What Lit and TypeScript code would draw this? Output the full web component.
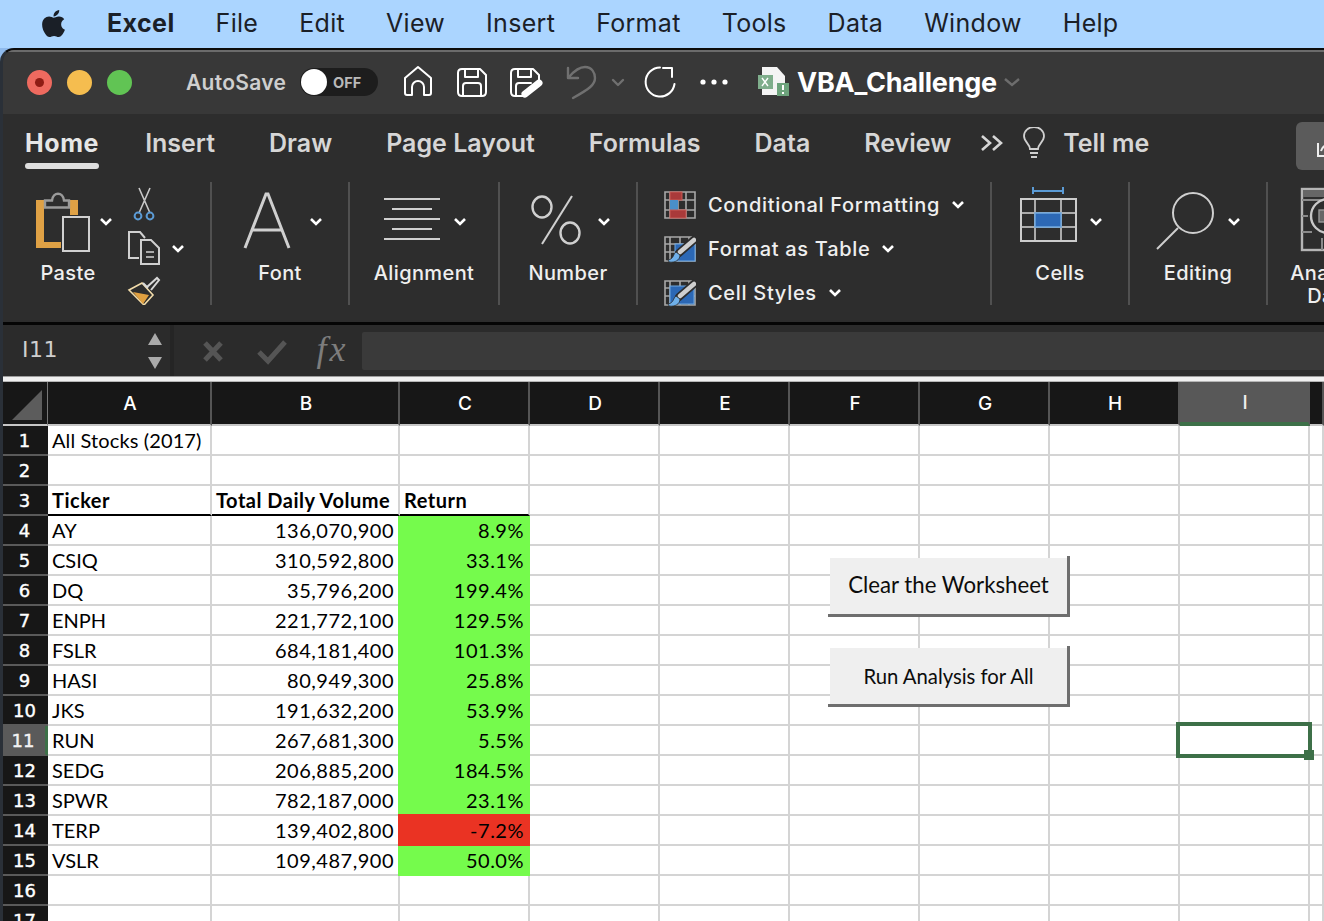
import { LitElement, html, css, svg } from 'lit'
import { customElement } from 'lit/decorators.js'

const MENU = ['File', 'Edit', 'View', 'Insert', 'Format', 'Tools', 'Data', 'Window', 'Help']
const TABS = ['Insert', 'Draw', 'Page Layout', 'Formulas', 'Data', 'Review']
const COLS = ['A', 'B', 'C', 'D', 'E', 'F', 'G', 'H', 'I', '']

const STOCKS: [string, string, string][] = [
  ['AY', '136,070,900', '8.9%'],
  ['CSIQ', '310,592,800', '33.1%'],
  ['DQ', '35,796,200', '199.4%'],
  ['ENPH', '221,772,100', '129.5%'],
  ['FSLR', '684,181,400', '101.3%'],
  ['HASI', '80,949,300', '25.8%'],
  ['JKS', '191,632,200', '53.9%'],
  ['RUN', '267,681,300', '5.5%'],
  ['SEDG', '206,885,200', '184.5%'],
  ['SPWR', '782,187,000', '23.1%'],
  ['TERP', '139,402,800', '-7.2%'],
  ['VSLR', '109,487,900', '50.0%'],
]

const chevron = html`<svg class="chev" width="14" height="9" viewBox="0 0 14 9"><path d="M2 2l5 5 5-5" fill="none" stroke="#fff" stroke-width="2.6"/></svg>`

const brush = svg`
  <path d="M31 4L15 18" stroke="#2d2d2d" stroke-width="8" stroke-linecap="round"/>
  <path d="M30 5L16 17" stroke="#cfcfcf" stroke-width="4.5" stroke-linecap="round"/>
  <path d="M5 27c6 1 11-2 11-7l-4-3c-3 2-2 7-8 8z" fill="#6fb0ea" stroke="#2d2d2d" stroke-width=".8"/>`

@customElement('app-root')
export class AppRoot extends LitElement {
  static styles = css`
    :host {
      display: block;
      width: 1324px;
      height: 921px;
      overflow: hidden;
      background: #8fbaec;
      font-family: Inter, "Liberation Sans", sans-serif;
    }

    svg { display: block; flex: none; }

    .menubar {
      height: 48px;
      box-sizing: border-box;
      background: #abd5ff;
      display: flex;
      align-items: center;
      padding: 0 0 2px 40px;
      gap: 41px;
      font-size: 25px;
      letter-spacing: 0.3px;
      color: #1b2027;
    }
    .menubar .logo { margin-right: -1px; }
    .menubar b { font-weight: 700; letter-spacing: 0.4px; }

    .window {
      height: 873px;
      box-sizing: border-box;
      border-left: 3px solid #2a3038;
      border-top: 2px solid #0c0c0c;
      border-top-left-radius: 14px;
      background: #2d2d2d;
      overflow: hidden;
    }

    .titlebar {
      height: 64px;
      box-sizing: border-box;
      background: #383838;
      border-top: 2px solid #6b6b6b;
      display: flex;
      align-items: center;
      padding: 0 0 2px 24px;
    }
    .light {
      width: 25px;
      height: 25px;
      border-radius: 50%;
      margin-right: 15px;
      display: flex;
      align-items: center;
      justify-content: center;
    }
    .light.red { background: #ee6a5f; }
    .light.red::after {
      content: '';
      width: 9px;
      height: 9px;
      border-radius: 50%;
      background: #8e1c14;
    }
    .light.yellow { background: #f5bd4f; }
    .light.green { background: #61c454; }
    .autosave {
      margin-left: 39px;
      font-size: 21px;
      font-weight: 600;
      color: #cfcfcf;
      letter-spacing: 0.3px;
      width: 114px;
    }
    .toggle {
      width: 78px;
      height: 28px;
      border-radius: 14px;
      background: #1d1d1d;
      display: flex;
      align-items: center;
      box-sizing: border-box;
      padding-left: 1px;
    }
    .knob {
      width: 26px;
      height: 26px;
      border-radius: 50%;
      background: #fff;
      margin-right: 6px;
    }
    .toggle span { font-size: 14.5px; font-weight: 700; color: #b9b9b9; }
    .quick { margin-left: 22px; }
    .doc { margin-left: 18px; }
    .docname {
      margin-left: 7px;
      font-size: 27px;
      font-weight: 700;
      color: #fff;
      letter-spacing: -0.25px;
    }
    .docchev { margin-left: 7px; }

    .tabs {
      height: 64px;
      position: relative;
      display: flex;
      align-items: center;
      padding: 0 0 6px 22px;
      box-sizing: border-box;
      gap: 54px;
      font-size: 25px;
      font-weight: 600;
      color: #d6d6d6;
    }
    .tab-home {
      color: #e6e6e6;
      font-weight: 700;
      letter-spacing: 0.6px;
      position: relative;
      margin-right: -8px;
    }
    .tab-home::after {
      content: '';
      position: absolute;
      left: 0;
      right: 0;
      bottom: -11px;
      height: 6px;
      border-radius: 3px;
      background: #dedede;
    }
    .more { margin-left: -25px; }
    .bulb { margin-left: -35px; }
    .tell { margin-left: -36px; }
    .share {
      position: absolute;
      left: 1293px;
      top: 8px;
      width: 40px;
      height: 48px;
      background: #5b5b5b;
      border-radius: 6px;
    }

    .ribbon {
      height: 147px;
      box-sizing: border-box;
      padding-top: 4px;
      border-bottom: 3px solid #050505;
      display: flex;
      align-items: flex-start;
      overflow: hidden;
    }
    .group {
      width: 138px;
      height: 123px;
      box-sizing: border-box;
      border-right: 2px solid #505050;
      display: flex;
      flex-direction: column;
      align-items: center;
      flex: none;
    }
    .label {
      margin-top: 4px;
      height: 22px;
      line-height: 22px;
      font-size: 20px;
      font-weight: 500;
      color: #efefef;
      text-align: center;
      letter-spacing: 0.4px;
    }
    .paste { width: 209px; flex-direction: row; align-items: flex-start; }
    .paste .col { width: 130px; display: flex; flex-direction: column; align-items: center; }
    .paste .clip { margin-left: -8px; }
    .align { width: 150px; }
    .styles { width: 354px; align-items: flex-start; padding-left: 26px; }
    .style-row {
      height: 44px;
      box-sizing: border-box;
      padding-top: 1px;
      flex: none;
      display: flex;
      align-items: center;
      font-size: 20px;
      font-weight: 500;
      color: #efefef;
      letter-spacing: 0.7px;
      white-space: nowrap;
    }
    .style-row svg:first-child { margin-right: 12px; }
    .style-row .chev { margin-left: 11px; }
    .analyze { width: 124px; border: none; }
    .analyze svg { align-self: flex-start; }
    .analyze .label { line-height: 23px; height: 46px; }

    .formula {
      height: 51px;
      display: flex;
      background: #2b2b2b;
    }
    .namebox {
      width: 171px;
      box-sizing: border-box;
      padding-left: 19px;
      display: flex;
      align-items: center;
      justify-content: space-between;
      font-family: "DejaVu Sans", sans-serif;
      font-size: 22px;
      letter-spacing: 0.5px;
      color: #cfcfcf;
      border-right: 4px solid #252525;
      flex: none;
    }
    .namebox span { padding-bottom: 3px; }
    .steppers { margin-right: 8px; }
    .marks { margin-left: 25px; flex: none; }
    .fx {
      width: 59px;
      text-align: center;
      font-family: "Liberation Serif", serif;
      font-style: italic;
      font-size: 36px;
      letter-spacing: 3px;
      line-height: 49px;
      color: #7d7d7d;
      flex: none;
      margin-left: -11px;
    }
    .input {
      flex: 1;
      margin: 7px 0 6px 0;
      background: #3a3a3a;
      border-radius: 2px 0 0 2px;
    }
    .rule {
      height: 6px;
      box-sizing: border-box;
      background: #f0f0f0;
      border-top: 1px solid #9c9c9c;
      border-bottom: 1px solid #b5b5b5;
    }

    .sheet {
      position: relative;
      display: grid;
      grid-template-columns: 45px 164px 188px repeat(7, 130px) 1fr;
      grid-auto-rows: 30px;
      grid-template-rows: 44px;
      background: #fff;
      color: #000;
      font-family: Lato, "Liberation Sans", sans-serif;
      font-size: 20px;
    }
    .corner, .colhead {
      background: #171717;
      border-bottom: 2px solid #c6c6c6;
      box-sizing: border-box;
    }
    .corner { border-right: 1px solid #777; padding: 8px 0 0 9px; }
    .colhead {
      border-right: 2px solid #555;
      color: #fff;
      font-family: Inter, sans-serif;
      font-size: 19px;
      font-weight: 500;
      display: flex;
      align-items: center;
      justify-content: center;
      padding: 1px 0 0 2px;
    }
    .colhead.active {
      background: #585858;
      border-right-color: #585858;
      border-bottom: 4px solid #3d7048;
      color: #eee;
    }
    .rowhead {
      background: #171717;
      border-bottom: 2px solid #5a5a5a;
      box-sizing: border-box;
      color: #fff;
      font-family: "DejaVu Sans", sans-serif;
      font-size: 18px;
      -webkit-text-stroke: 0.4px #fff;
      display: flex;
      align-items: center;
      justify-content: center;
      padding: 1px 2px 0 0;
    }
    .rowhead.active {
      background: #5a5a5a;
      border-right: 3px solid #3d7048;
      color: #eee;
    }
    .cell {
      box-sizing: border-box;
      border-right: 2px solid #d4d4d4;
      border-bottom: 2px solid #d4d4d4;
      padding: 0 4px;
      line-height: 28px;
      white-space: nowrap;
      overflow: visible;
    }
    .cell.title { letter-spacing: 0.12px; }
    .cell.bold { font-weight: 700; letter-spacing: 0.5px; border-bottom: 2px solid #000; }
    .cell.num { text-align: right; letter-spacing: 0.5px; }
    .cell.up { background: #75fb4c; border-color: #75fb4c; box-shadow: -2px 0 0 #75fb4c; }
    .cell.down {
      background: #ea3323;
      border-color: #ea3323;
      box-shadow: -2px 0 0 #ea3323, 0 -2px 0 #ea3323, -2px -2px 0 #ea3323;
    }

    .btn {
      position: absolute;
      left: 825px;
      width: 242px;
      height: 61px;
      box-sizing: border-box;
      padding: 2px 3px 3px 2px;
      background: #6e6e6e;
      clip-path: polygon(0 58px, 2px 58px, 2px 2px, 239px 2px, 239px 0, 100% 0, 100% 100%, 0 100%);
    }
    .btn div {
      height: 100%;
      box-sizing: border-box;
      background: #efefef;
      display: flex;
      align-items: center;
      justify-content: center;
      color: #0c0c0c;
    }
    .btn.clear { top: 174px; }
    .btn.clear div { font-size: 22.2px; padding-bottom: 3px; }
    .btn.run { top: 264px; }
    .btn.run div { font-size: 20.3px; padding-bottom: 1px; }
    .selection {
      position: absolute;
      left: 1173px;
      top: 340px;
      width: 136px;
      height: 36px;
      box-sizing: border-box;
      border: 4px solid #3d7048;
    }
    .selection::after {
      content: '';
      position: absolute;
      right: -6px;
      bottom: -6px;
      width: 10px;
      height: 10px;
      background: #3d7048;
    }
  `

  private titleIcons() {
    return html`<svg class="quick" width="340" height="46" viewBox="400 59 340 46" fill="none" stroke="#fff" stroke-width="2" stroke-linejoin="round" stroke-linecap="round">
      <path d="M405 78L418 67l13 11v15q0 2-2 2h-5V87a6 6 0 0 0-12 0v8h-5q-2 0-2-2z"/>
      <path d="M462 69h18l6 6v17q0 4-4 4h-20q-4 0-4-4V73q0-4 4-4z"/>
      <path d="M465 69v8h13v-8M463 96V86q0-3 3-3h12q3 0 3 3v10"/>
      <path d="M515 69h18l6 6v5M524 96h-9q-4 0-4-4V73q0-4 4-4M518 69v8h13v-8M516 96V86q0-3 3-3h12"/>
      <path d="M525 94L539 83" stroke-width="7"/>
      <g stroke="#707070" stroke-width="2.4">
        <path d="M568 68v10h10M569 77c6-7 11-10 16-10 7 0 10 6 10 11 0 7-6 11-22 20"/>
        <path d="M613 80l5 5 5-5"/>
      </g>
      <path d="M660 67.5A14.5 14.5 0 1 0 674.5 84M663 68h9v9"/>
      <g fill="#fff" stroke="none">
        <circle cx="703" cy="82" r="2.6"/><circle cx="714" cy="82" r="2.6"/><circle cx="725" cy="82" r="2.6"/>
      </g>
    </svg>`
  }

  private docIcon() {
    return html`<svg class="doc" width="32" height="30" viewBox="758 67 32 30">
      <path d="M762 67h15l8 9v19h-23z" fill="#f4f4f4"/>
      <rect x="758" y="75" width="15" height="14" fill="#7fae8c"/>
      <path d="M762 78l6 8M768 78l-6 8" stroke="#fff" stroke-width="1.4"/>
      <rect x="777" y="83" width="12" height="13" fill="#6da37c"/>
      <path d="M783 85v5M783 92v2" stroke="#fff" stroke-width="2"/>
    </svg>`
  }

  private pasteIcons() {
    return html`<svg width="130" height="76" viewBox="3 182 130 76">
      <path d="M36 200h42v15h-8v-8H44v35h17v6H36z" fill="#dfa145"/>
      <path d="M45 207.500v-7h7c1-9 11-9 12 0h5v7z" fill="#2d2d2d" stroke="#9a9a9a" stroke-width="2.400"/>
      <rect x="63" y="217" width="26" height="34" fill="#2d2d2d" stroke="#d0d0d0" stroke-width="2"/>
      <path d="M101 219l5 5 5-5" fill="none" stroke="#fff" stroke-width="2.6"/>
    </svg>`
  }

  private clipIcons() {
    return html`<svg class="clip" width="70" height="123" viewBox="125 182 70 123" fill="none">
      <path d="M139 188l11 25M150 188l-11 25" stroke="#c8c8c8" stroke-width="1.6"/>
      <circle cx="138" cy="216" r="3.4" stroke="#5b9bd5" stroke-width="2"/>
      <circle cx="150" cy="216" r="3.4" stroke="#5b9bd5" stroke-width="2"/>
      <path d="M139 258h-10v-26h11l5 6" stroke="#cfcfcf" stroke-width="2"/>
      <path d="M141 240h10l8 8v16h-18z" fill="#2d2d2d" stroke="#cfcfcf" stroke-width="2"/>
      <path d="M146 252h8M146 257h8" stroke="#aaa" stroke-width="2"/>
      <path d="M173 246l5 5 5-5" stroke="#fff" stroke-width="2.6"/>
      <path d="M129 290l13-7 11 12-9 10z" stroke="#f2dcaa" stroke-width="1.6"/>
      <path d="M133 292l16 3-6 9z" fill="#e0a040"/>
      <path d="M143 283l5 5M147 287l10-9 2 2-8 10" stroke="#d8d8d8" stroke-width="2"/>
    </svg>`
  }

  private cfIcon() {
    return html`<svg width="32" height="28" viewBox="664 190 32 28" fill="none">
      <path d="M665 191h30v26h-30zM670 191v26M678 191v26M686 191v26M665 199h30M665 209h30" stroke="#a8a8a8" stroke-width="1.6"/>
      <rect x="670" y="191" width="12" height="8" fill="#a93a3a" stroke="#c75a55"/>
      <rect x="670" y="199" width="8" height="10" fill="#4a8fc9"/>
      <rect x="670" y="209" width="16" height="8" fill="#a93a3a" stroke="#c75a55"/>
    </svg>`
  }

  private tableIcon(stylesIcon: boolean) {
    return html`<svg width="32" height="28" viewBox="0 0 32 28" fill="none">
      <path d="M1 2h30v24H1zM6 2v24M16 2v24M25 2v24M1 9h30M1 17h30" stroke="#a8a8a8" stroke-width="1.6"/>
      ${stylesIcon
        ? svg`<rect x="6" y="7" width="24" height="18" fill="#2c68b5" stroke="#6fa8e0"/>`
        : svg`<rect x="11" y="9" width="20" height="17" fill="#2c68b5" stroke="#6fa8e0"/>`}
      ${brush}
    </svg>`
  }

  private bigIcons(kind: string) {
    const common = 'fill:none;stroke:#cfcfcf;'
    if (kind === 'font') {
      return html`<svg width="136" height="76" viewBox="212 182 136 76">
        <path d="M245 248l21-54h2l21 54M252 230h31" style="${common}stroke-width:3"/>
        <path d="M311 219l5 5 5-5" fill="none" stroke="#fff" stroke-width="2.6"/>
      </svg>`
    }
    if (kind === 'align') {
      return html`<svg width="148" height="76" viewBox="350 182 148 76">
        <path d="M384 199h56M392 209h40M384 219h56M392 229h40M384 239h56" style="${common}stroke-width:2"/>
        <path d="M455 219l5 5 5-5" fill="none" stroke="#fff" stroke-width="2.6"/>
      </svg>`
    }
    if (kind === 'number') {
      return html`<svg width="136" height="76" viewBox="500 182 136 76">
        <ellipse cx="542" cy="207" rx="9.5" ry="10.5" style="${common}stroke-width:2.4"/>
        <ellipse cx="570" cy="233" rx="9.5" ry="10.5" style="${common}stroke-width:2.4"/>
        <path d="M572 196l-30 48" style="${common}stroke-width:2"/>
        <path d="M599 219l5 5 5-5" fill="none" stroke="#fff" stroke-width="2.6"/>
      </svg>`
    }
    if (kind === 'cells') {
      return html`<svg width="136" height="76" viewBox="992 182 136 76" fill="none">
        <path d="M1033 187v7M1063 187v7M1033 191h30" stroke="#5b9bd5" stroke-width="2"/>
        <path d="M1021 199h55v42h-55zM1035 199v42M1061 199v42M1021 213h55M1021 227h55" stroke="#aaa" stroke-width="2"/>
        <rect x="1035" y="213" width="26" height="14" fill="#2c68b5" stroke="#6fa8e0" stroke-width="1.5"/>
        <path d="M1021 199h55v42h-55z" stroke="#ccc" stroke-width="2"/>
        <path d="M1091 219l5 5 5-5" stroke="#fff" stroke-width="2.6"/>
      </svg>`
    }
    return html`<svg width="136" height="76" viewBox="1130 182 136 76" fill="none">
      <circle cx="1193" cy="213" r="20" stroke="#cfcfcf" stroke-width="2"/>
      <path d="M1178 228l-21 21" stroke="#cfcfcf" stroke-width="2"/>
      <path d="M1229 219l5 5 5-5" stroke="#fff" stroke-width="2.6"/>
    </svg>`
  }

  private analyzeIcon() {
    return html`<svg width="76" height="76" viewBox="1268 182 76 76" fill="none">
      <rect x="1302" y="189" width="40" height="61" stroke="#b5b5b5" stroke-width="2.4"/>
      <rect x="1303" y="190" width="40" height="7" fill="#666"/>
      <path d="M1302 200h40M1302 216h6M1302 232h10M1322 238v12" stroke="#8a8a8a" stroke-width="2"/>
      <circle cx="1328" cy="216" r="17" fill="#2d2d2d" stroke="#c8c8c8" stroke-width="2.4"/>
      <rect x="1319" y="210" width="12" height="12" fill="#666" stroke="#999" stroke-width="1.4"/>
    </svg>`
  }

  private renderRows() {
    const rows: unknown[] = []
    for (let r = 1; r <= 17; r++) {
      const stock = r >= 4 && r <= 15 ? STOCKS[r - 4] : null
      const isHeader = r === 3
      rows.push(html`<div class="rowhead ${r === 11 ? 'active' : ''}">${r}</div>`)
      COLS.forEach((_, c) => {
        let text = ''
        let cls = 'cell'
        if (r === 1 && c === 0) {
          text = 'All Stocks (2017)'
          cls += ' title'
        }
        if (isHeader && c < 3) {
          text = ['Ticker', 'Total Daily Volume', 'Return'][c]
          cls += ' bold'
        }
        if (stock && c < 3) {
          text = stock[c]
          if (c > 0) cls += ' num'
          if (c === 2) cls += stock[2].startsWith('-') ? ' down' : ' up'
        }
        rows.push(html`<div class=${cls}>${text}</div>`)
      })
    }
    return rows
  }

  render() {
    return html`
      <div class="menubar">
        <svg class="logo" width="27" height="31" viewBox="0 0 384 512"><path fill="#1a1f27" d="M318.7 268.7c-.2-36.7 16.4-64.4 50-84.8-18.8-26.9-47.2-41.7-84.7-44.6-35.5-2.8-74.3 20.7-88.5 20.7-15 0-49.4-19.7-76.4-19.7C63.3 141.2 4 184.8 4 273.5q0 39.3 14.4 81.2c12.8 36.7 59 126.7 107.2 125.2 25.2-.6 43-17.9 75.8-17.9 31.8 0 48.3 17.9 76.4 17.9 48.6-.7 90.4-82.5 102.6-119.3-65.2-30.7-61.7-90-61.7-91.9zm-56.6-164.2c27.3-32.4 24.8-61.9 24-72.5-24.1 1.4-52 16.4-67.9 34.9-17.5 19.8-27.8 44.3-25.6 71.9 26.1 2 49.9-11.4 69.5-34.3z"/></svg>
        <b>Excel</b>
        ${MENU.map(m => html`<span>${m}</span>`)}
      </div>
      <div class="window">
        <div class="titlebar">
          <span class="light red"></span><span class="light yellow"></span><span class="light green"></span>
          <span class="autosave">AutoSave</span>
          <span class="toggle"><span class="knob"></span><span>OFF</span></span>
          ${this.titleIcons()}
          ${this.docIcon()}
          <span class="docname">VBA_Challenge</span>
          <svg class="docchev" width="16" height="10" viewBox="0 0 16 10"><path d="M1 2l7 6 7-6" fill="none" stroke="#6d6d6d" stroke-width="2.4"/></svg>
        </div>
        <div class="tabs">
          <span class="tab-home">Home</span>
          ${TABS.map(t => html`<span>${t}</span>`)}
          <svg class="more" width="24" height="18" viewBox="0 0 24 18"><path d="M2 2l8 7-8 7M13 2l8 7-8 7" fill="none" stroke="#d6d6d6" stroke-width="2.6"/></svg>
          <svg class="bulb" width="22" height="32" viewBox="0 0 22 32" fill="none" stroke="#cfcfcf" stroke-width="1.8"><path d="M7 22c0-5-6-7-6-13a10 9 0 0 1 20 0c0 6-6 8-6 13z"/><path d="M7 26h8M8 30h6"/></svg>
          <span class="tell">Tell me</span>
          <div class="share">
            <svg width="40" height="48" viewBox="1293 122 40 48" fill="none" stroke="#eee" stroke-width="2"><path d="M1315 143v13h12M1318 151c1-4 4-6 8-7M1322 141l5 3-3 5"/></svg>
          </div>
        </div>
        <div class="ribbon">
          <section class="group paste">
            <div class="col">${this.pasteIcons()}<div class="label">Paste</div></div>
            ${this.clipIcons()}
          </section>
          <section class="group">${this.bigIcons('font')}<div class="label">Font</div></section>
          <section class="group align">${this.bigIcons('align')}<div class="label">Alignment</div></section>
          <section class="group">${this.bigIcons('number')}<div class="label">Number</div></section>
          <section class="group styles">
            <div class="style-row">${this.cfIcon()}Conditional Formatting${chevron}</div>
            <div class="style-row">${this.tableIcon(false)}Format as Table${chevron}</div>
            <div class="style-row">${this.tableIcon(true)}Cell Styles${chevron}</div>
          </section>
          <section class="group">${this.bigIcons('cells')}<div class="label">Cells</div></section>
          <section class="group">${this.bigIcons('editing')}<div class="label">Editing</div></section>
          <section class="group analyze">${this.analyzeIcon()}<div class="label">Analyze<br />Data</div></section>
        </div>
        <div class="formula">
          <div class="namebox">
            <span>I11</span>
            <svg class="steppers" width="14" height="36" viewBox="0 0 14 36"><path d="M7 0l7 12H0zM7 36l7-12H0z" fill="#aaa"/></svg>
          </div>
          <svg class="marks" width="115" height="51" viewBox="0 0 115 51" fill="none" stroke="#555" stroke-width="5">
            <path d="M6 18l16 17M22 18L6 35"/>
            <path d="M60 27l9 9 17-19"/>
          </svg>
          <div class="fx">fx</div>
          <div class="input"></div>
        </div>
        <div class="rule"></div>
        <div class="sheet">
          <div class="corner"><svg width="30" height="30" viewBox="0 0 30 30"><path d="M30 0v30H0z" fill="#5c5c5c"/></svg></div>
          ${COLS.map(c => html`<div class="colhead ${c === 'I' ? 'active' : ''}">${c}</div>`)}
          ${this.renderRows()}
          <div class="btn clear"><div>Clear the Worksheet</div></div>
          <div class="btn run"><div>Run Analysis for All</div></div>
          <div class="selection"></div>
        </div>
      </div>
    `
  }
}
